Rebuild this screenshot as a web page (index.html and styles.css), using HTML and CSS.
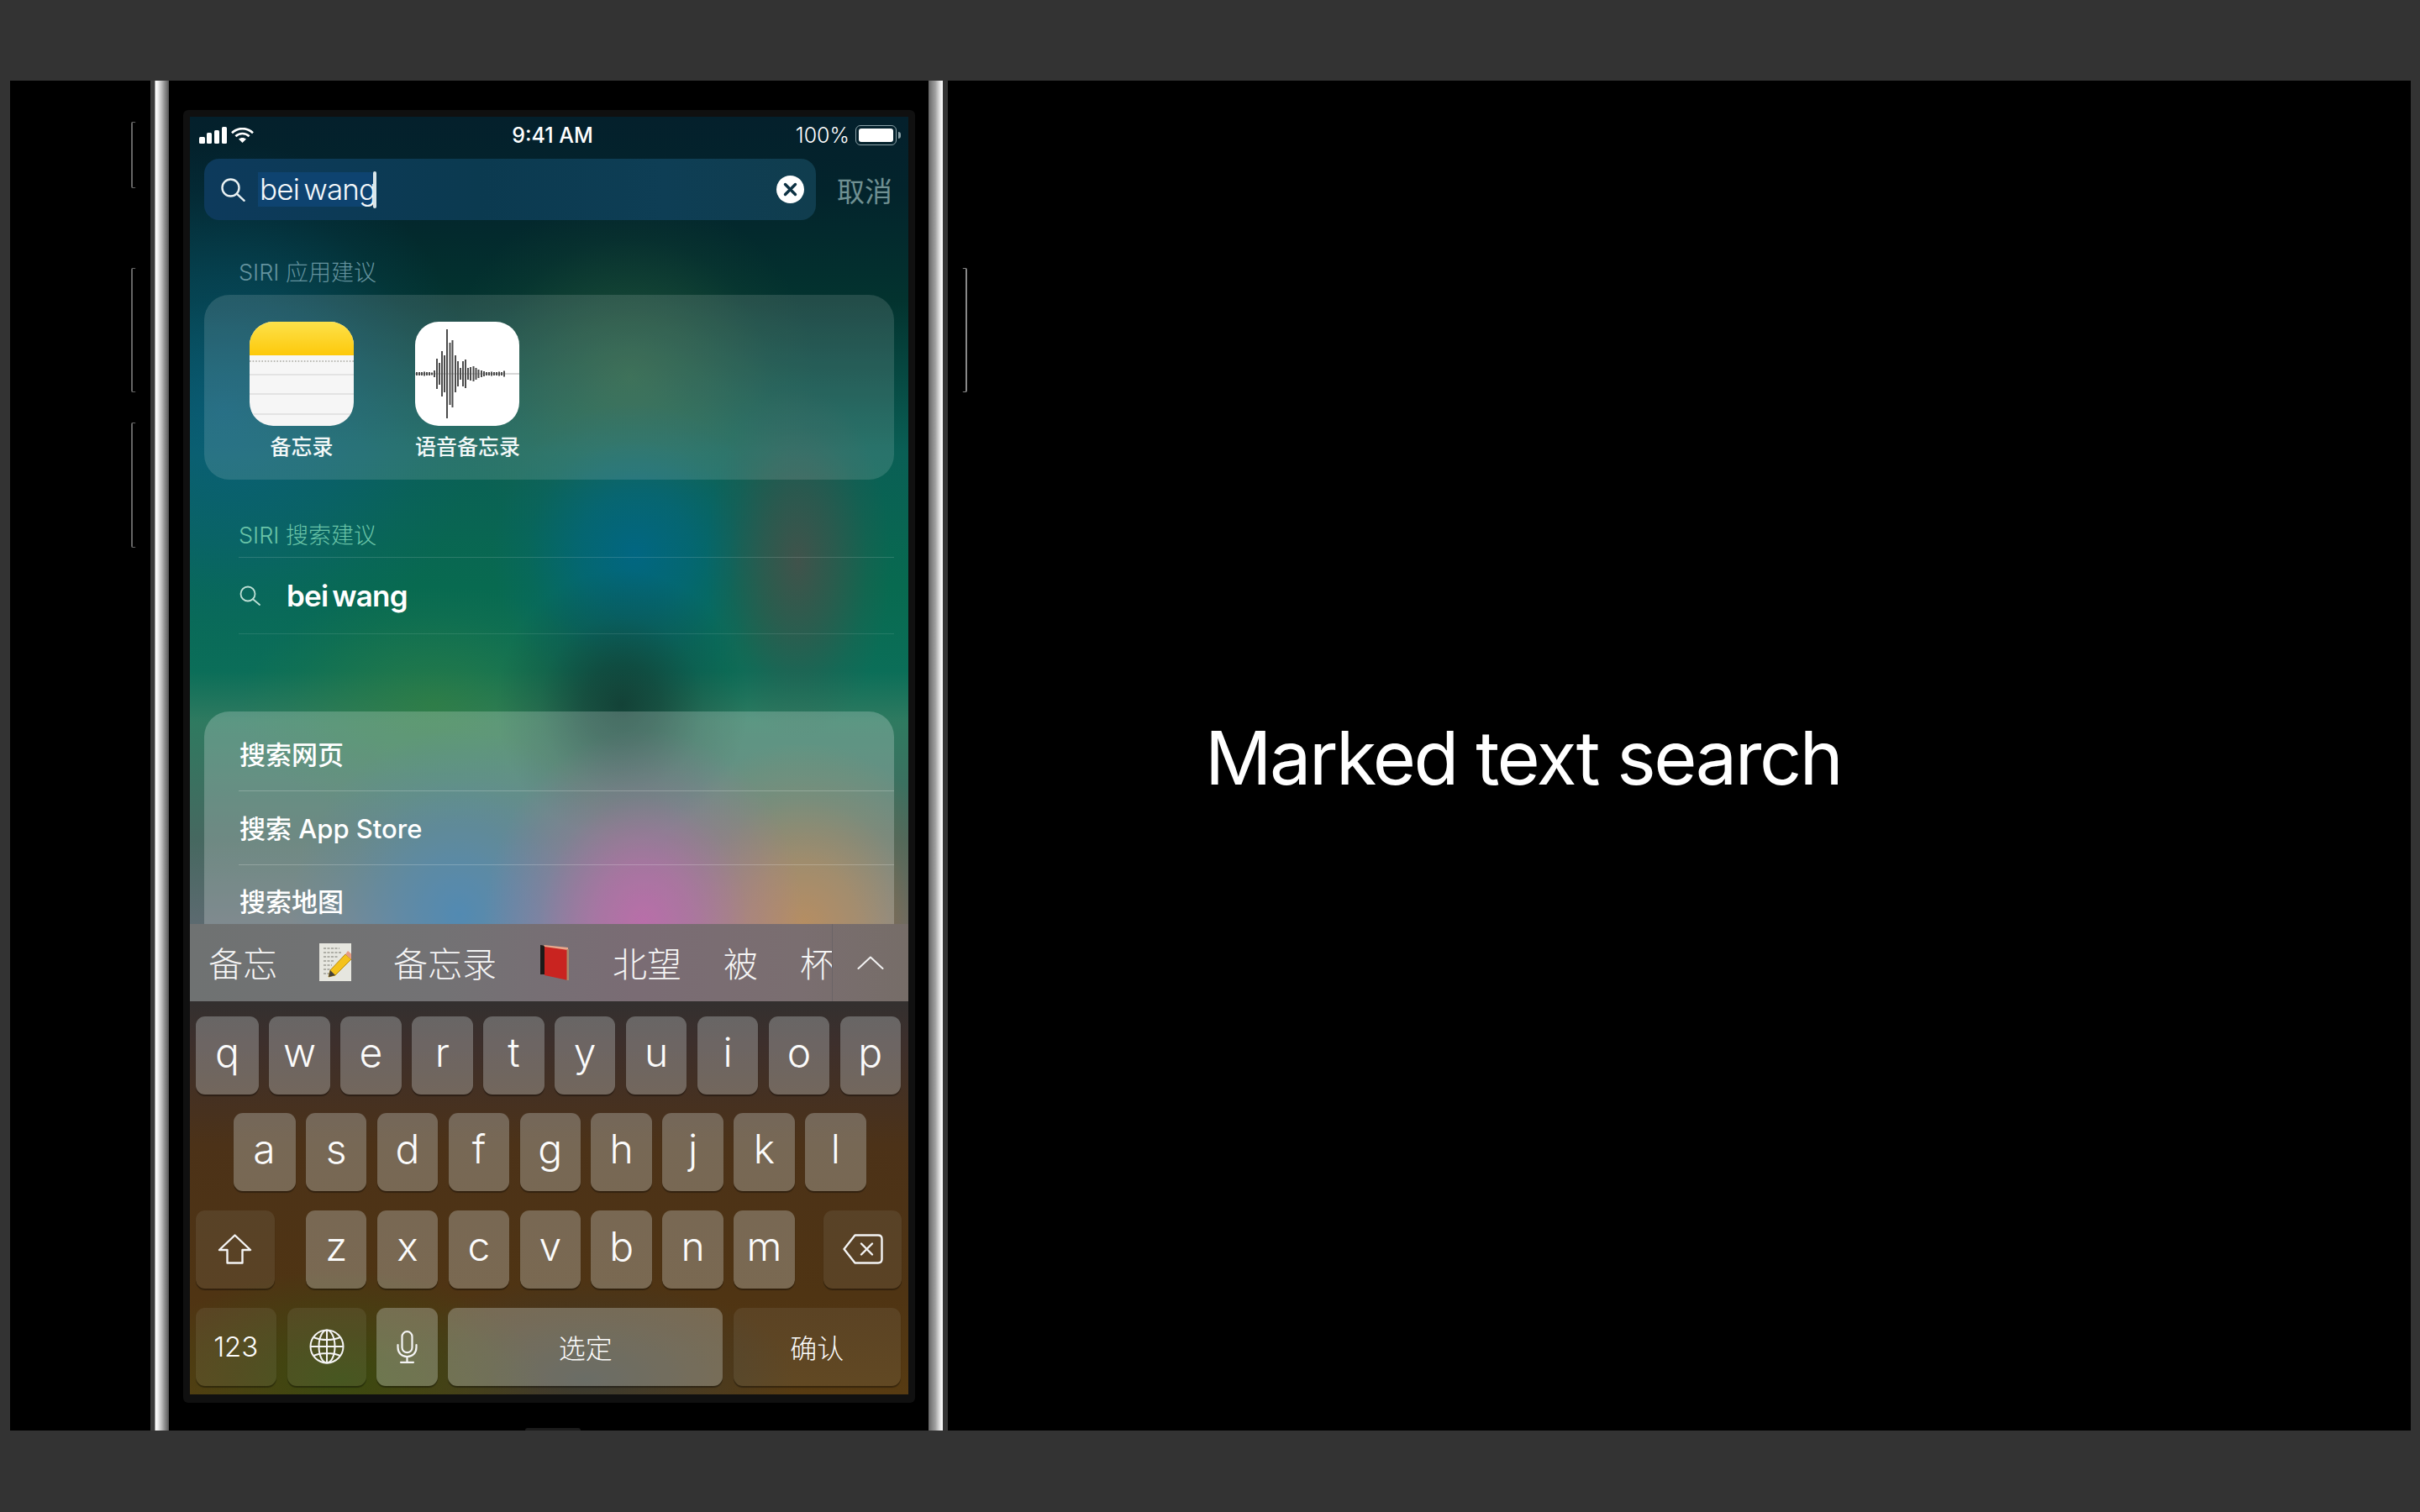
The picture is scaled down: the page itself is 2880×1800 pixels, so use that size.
FILE: index.html
```html
<!DOCTYPE html>
<html lang="en">

<head>
    <meta charset="UTF-8">
    <title>Marked text search</title>
    <link rel="stylesheet" href="styles.css">
</head>

<body>
    <div class="slide">
        <div class="side-buttons">
            <div class="side-btn mute"></div>
            <div class="side-btn vol-up"></div>
            <div class="side-btn vol-down"></div>
        </div>
        <div class="metal metal-left"></div>

        <div class="face">
            <div class="frame">
                <div class="screen">
                    <div class="results">
                        <div class="status-bar">
                            <div class="status-left">
                                <div class="signal"><i class="s1"></i><i class="s2"></i><i class="s3"></i><i class="s4"></i></div>
                                <svg class="wifi" viewBox="0 0 27 18" fill="none" stroke="#fff" stroke-width="2.6">
                                    <path d="M1 6.2C8 -0.6 19 -0.6 26 6.2" />
                                    <path d="M5.4 10.2C9.8 6 17.2 6 21.6 10.2" />
                                    <path d="M13.5 18L9 13.6C11.4 11.4 15.6 11.4 18 13.6Z" fill="#fff" stroke="none" />
                                </svg>
                            </div>
                            <div class="time">9:41 AM</div>
                            <div class="status-right">
                                <span class="percent">100%</span>
                                <div class="battery"><div class="battery-fill"></div></div>
                                <div class="battery-tip"></div>
                            </div>
                        </div>

                        <div class="search-row">
                            <div class="search-field">
                                <svg class="search-icon" viewBox="0 0 29 28" fill="none" stroke="#e8f0f2" stroke-width="2.4" stroke-linecap="round">
                                    <circle cx="11.5" cy="11.5" r="10" />
                                    <path d="M18.8 18.6L27.6 26.8" />
                                </svg>
                                <span class="marked">bei wang</span><span class="caret"></span>
                                <div class="clear-btn">
                                    <svg viewBox="0 0 33 33" fill="none" stroke="#0d3244" stroke-width="3.4" stroke-linecap="round">
                                        <path d="M10.5 10.5L22.5 22.5M22.5 10.5L10.5 22.5" />
                                    </svg>
                                </div>
                            </div>
                            <div class="cancel">取消</div>
                        </div>

                        <div class="section-title apps-title">SIRI 应用建议</div>
                        <div class="card apps-card">
                            <div class="app">
                                <svg class="app-icon" viewBox="0 0 124 124">
                                    <defs>
                                        <linearGradient id="noteTop" x1="0" y1="0" x2="0" y2="1">
                                            <stop offset="0" stop-color="#fde14a" />
                                            <stop offset="1" stop-color="#fdc90b" />
                                        </linearGradient>
                                    </defs>
                                    <rect width="124" height="124" fill="#f6f6f6" />
                                    <rect width="124" height="40" fill="url(#noteTop)" />
                                    <path d="M0 47H124" stroke="#a8a8a0" stroke-width="1.6" stroke-dasharray="1.6 2" />
                                    <path d="M0 63H124M0 86H124M0 110H124" stroke="#d0d0d0" stroke-width="1.2" />
                                </svg>
                                <div class="app-name">备忘录</div>
                            </div>
                            <div class="app">
                                <svg class="app-icon" viewBox="0 0 124 124">
                                    <rect width="124" height="124" fill="#fff" />
                                    <path d="M0 62H124" stroke="#b0b0b0" stroke-width="1.2" />
                                    <path stroke="#4c4c4c" stroke-width="2" d="M2 60V64M5 60V64M8 60V64M11 59.5V64.5M14 60V64M17 60V64M20 60.5V63.5M23 58V66M26 44V80M29 49V75M32 35V89M35 40V84M38 9V115M41.5 25V99M44.5 22V102M48 40V84M51 47V77M54 55V69M57 47V77M60 45V79M63 55V69M66 54V70M69.500 53V71M72.500 55V69M75.500 57V67M79 58V66M82 59V65M85 60V64M88 60V64M91 59.500V64.500M94 60V64M97 60V64M100 59.500V64.500M103 60V64M106 58.500V65.500" />
                                </svg>
                                <div class="app-name">语音备忘录</div>
                            </div>
                        </div>

                        <div class="section-title siri-title">SIRI 搜索建议</div>
                        <div class="suggest">
                            <svg class="suggest-icon" viewBox="0 0 27 24" fill="none" stroke="#bfe0d6" stroke-width="1.8" stroke-linecap="round">
                                <circle cx="10" cy="10" r="8.5" />
                                <path d="M16 16.200L24 23" />
                            </svg>
                            <span class="suggest-text">bei wang</span>
                        </div>

                        <div class="card web-card">
                            <div class="web-row">搜索网页</div>
                            <div class="web-row">搜索 App Store</div>
                            <div class="web-row">搜索地图</div>
                        </div>
                    </div>

                    <div class="candidates">
                        <div class="cand-list">
                            <span>备忘</span>
                            <svg class="emoji-memo" viewBox="0 0 38 45">
                                <rect width="38" height="45" fill="#e6e6df" />
                                <path d="M5 6H24M5 11H27M5 16H22M5 21H18M5 26H15M5 31H13M5 36H20" stroke="#77776f" stroke-width="1.2" stroke-dasharray="3 1.500" />
                                <path d="M31 13L38 19L19 38L11 40L13 32Z" fill="#f4c21c" stroke="#b68a14" stroke-width="1" />
                                <path d="M31 13L34 9L41 15L38 19Z" fill="#e59c82" />
                                <path d="M13 32L11 40L19 38Z" fill="#44403a" />
                            </svg>
                            <span>备忘录</span>
                            <svg class="emoji-book" viewBox="0 0 35 43">
                                <path d="M1 1L7 2V36L1 36Z" fill="#1d1a18" />
                                <path d="M6 2L34 6V43L6 37Z" fill="#c92420" />
                                <path d="M5 1L34 4V7L6 3Z" fill="#e8a78c" />
                                <path d="M32.500 6H35V43H32.500Z" fill="#a88a6c" />
                            </svg>
                            <span>北望</span>
                            <span>被</span>
                            <span>杯</span>
                        </div>
                        <div class="cand-more">
                            <svg viewBox="0 0 32 16" fill="none" stroke="#f2f2f2" stroke-width="2" stroke-linecap="round" stroke-linejoin="round">
                                <path d="M1.500 15L16 1.500L30.500 15" />
                            </svg>
                        </div>
                    </div>

                    <div class="keyboard">
                        <div class="key-row">
                            <div class="key key-q">q</div>
                            <div class="key">w</div>
                            <div class="key">e</div>
                            <div class="key">r</div>
                            <div class="key">t</div>
                            <div class="key">y</div>
                            <div class="key">u</div>
                            <div class="key">i</div>
                            <div class="key">o</div>
                            <div class="key">p</div>
                        </div>
                        <div class="key-row row-two">
                            <div class="key key-a">a</div>
                            <div class="key">s</div>
                            <div class="key">d</div>
                            <div class="key">f</div>
                            <div class="key">g</div>
                            <div class="key">h</div>
                            <div class="key">j</div>
                            <div class="key">k</div>
                            <div class="key">l</div>
                        </div>
                        <div class="key-row row-three">
                            <div class="key special key-shift">
                                <svg viewBox="0 0 41 36" fill="none" stroke="#f4f4f4" stroke-width="2.400" stroke-linejoin="round">
                                    <path d="M20.500 1.500L39 19H29.500V34.500H11.500V19H2Z" />
                                </svg>
                            </div>
                            <div class="key">z</div>
                            <div class="key">x</div>
                            <div class="key">c</div>
                            <div class="key">v</div>
                            <div class="key">b</div>
                            <div class="key">n</div>
                            <div class="key">m</div>
                            <div class="key special key-delete">
                                <svg viewBox="0 0 48 36" fill="none" stroke="#f4f4f4" stroke-width="2.400" stroke-linejoin="round" stroke-linecap="round">
                                    <path d="M14.500 1.500H42C45 1.500 46.500 3 46.500 6V30C46.500 33 45 34.500 42 34.500H14.500L1.500 18Z" />
                                    <path d="M22 11.500L35 24.500M35 11.500L22 24.500" />
                                </svg>
                            </div>
                        </div>
                        <div class="key-row">
                            <div class="key special key-num">123</div>
                            <div class="key special key-globe">
                                <svg viewBox="0 0 42 42" fill="none" stroke="#f4f4f4" stroke-width="2">
                                    <circle cx="21" cy="21" r="19.500" />
                                    <ellipse cx="21" cy="21" rx="9.500" ry="19.500" />
                                    <path d="M21 1.500V40.500M1.500 21H40.500M5 10C14 14 28 14 37 10M5 32C14 28 28 28 37 32" />
                                </svg>
                            </div>
                            <div class="key key-mic">
                                <svg viewBox="0 0 25 39" fill="none" stroke="#f4f4f4" stroke-width="2.200" stroke-linecap="round">
                                    <rect x="6.500" y="1.200" width="12" height="25" rx="6" />
                                    <path d="M1.500 17V20C1.500 26.500 6 31 12.500 31C19 31 23.500 26.500 23.500 20V17M12.500 31V37.500M5 37.800H20" />
                                </svg>
                            </div>
                            <div class="key key-space">选定</div>
                            <div class="key special key-ok">确认</div>
                        </div>
                    </div>
                </div>
            </div>
            <div class="home-bump"></div>
        </div>

        <div class="metal metal-right"></div>
        <div class="side-buttons right-buttons">
            <div class="side-btn power"></div>
        </div>

        <div class="stage">
            <h1>Marked text search</h1>
        </div>
    </div>
</body>

</html>
```

FILE: styles.css
```css
* {
    box-sizing: border-box;
}

body {
    margin: 0;
    height: 1800px;
    padding: 96px 11px 97px 12px;
    background-color: #333333;
    font-family: "Inter", "Noto Sans CJK SC", sans-serif;
    overflow: hidden;
}

.slide {
    display: flex;
    height: 100%;
    background-color: #000;
}

/* hardware buttons */
.side-buttons {
    display: flex;
    flex-direction: column;
    width: 6px;
    margin-left: 144px;
    padding-top: 49px;
}

.right-buttons {
    margin-left: 17px;
}

.side-btn {
    border: 1px solid #666;
    border-width: 1px 1px 1px 2px;
    border-radius: 2px;
    border-right-color: transparent;
}

.right-buttons .side-btn {
    border-width: 1px 2px 1px 1px;
    border-color: #888;
    border-left-color: transparent;
}

.mute {
    height: 79px;
}

.vol-up {
    height: 148px;
    margin-top: 95px;
}

.vol-down {
    height: 149px;
    margin-top: 36px;
}

.power {
    height: 148px;
    margin-top: 174px;
}

.metal {
    width: 23px;
}

.metal-left {
    width: 22px;
    margin-left: 17px;
    background: linear-gradient(90deg, #3a3a3a 0, #3a3a3a 5px, #fff 6px, #eee 9px, #8f8f8f 17px, #555 22px);
}

.metal-right {
    background: linear-gradient(90deg, #666 0, #a0a0a0 8px, #e8e8e8 14px, #fff 17px, #333 17.500px, #333 23px);
}

.face {
    position: relative;
    display: flex;
    width: 904px;
    padding: 35px 16px 33px 17px;
    background-color: #000;
}

.frame {
    width: 871px;
    padding: 8px 8px 10px 8px;
    background-color: #101010;
    border-radius: 6px;
}

.home-bump {
    position: absolute;
    left: 424px;
    bottom: 0;
    width: 66px;
    height: 3px;
    background-color: #1c1c1c;
    border-radius: 33px 33px 0 0;
}

/* screen */
.screen {
    display: flex;
    flex-direction: column;
    height: 1521px;
    color: #fff;
    overflow: hidden;
}

.results {
    height: 961px;
    overflow: hidden;
    background:
        radial-gradient(ellipse 190px 230px at 540px 960px, rgba(165, 70, 145, 1) 0, rgba(165, 70, 145, 0.72) 30%, rgba(165, 70, 145, 0.25) 65%, rgba(165, 70, 145, 0) 100%),
        radial-gradient(ellipse 190px 220px at 730px 965px, rgba(165, 111, 51, 0.95) 0, rgba(165, 111, 51, 0.65) 35%, rgba(165, 111, 51, 0.2) 70%, rgba(165, 111, 51, 0) 100%),
        radial-gradient(ellipse 200px 220px at 320px 950px, rgba(31, 106, 159, 0.95) 0, rgba(31, 106, 159, 0.6) 35%, rgba(31, 106, 159, 0.2) 70%, rgba(31, 106, 159, 0) 100%),
        radial-gradient(ellipse 150px 160px at 514px 700px, rgba(18, 63, 53, 0.95) 0, rgba(18, 63, 53, 0.7) 30%, rgba(18, 63, 53, 0.25) 65%, rgba(18, 63, 53, 0) 100%),
        radial-gradient(ellipse 230px 140px at 290px 700px, rgba(51, 128, 63, 0.7) 0, rgba(51, 128, 63, 0.4) 40%, rgba(51, 128, 63, 0.12) 75%, rgba(51, 128, 63, 0) 100%),
        radial-gradient(ellipse 110px 210px at 724px 530px, rgba(74, 79, 74, 0.85) 0, rgba(74, 79, 74, 0.5) 40%, rgba(74, 79, 74, 0.15) 75%, rgba(74, 79, 74, 0) 100%),
        radial-gradient(ellipse 170px 180px at 530px 520px, rgba(0, 102, 138, 0.85) 0, rgba(0, 102, 138, 0.55) 40%, rgba(0, 102, 138, 0.15) 75%, rgba(0, 102, 138, 0) 100%),
        radial-gradient(ellipse 220px 220px at 524px 310px, rgba(62, 112, 66, 0.5) 0, rgba(62, 112, 66, 0.25) 45%, rgba(62, 112, 66, 0.07) 75%, rgba(62, 112, 66, 0) 100%),
        radial-gradient(ellipse 300px 320px at 40px 350px, rgba(10, 95, 138, 0.65) 0, rgba(10, 95, 138, 0.35) 50%, rgba(10, 95, 138, 0.1) 80%, rgba(10, 95, 138, 0) 100%),
        linear-gradient(180deg, #04202c 0, #03242c 90px, #03332f 220px, #0a5f55 400px, #086a50 560px, #0b6e58 660px, #2f7a60 720px, #466860 860px, #5c6a70 961px);
}

.status-bar {
    display: grid;
    grid-template-columns: 1fr auto 1fr;
    align-items: center;
    height: 50px;
    padding: 0 9px 6px 11px;
}

.status-left {
    display: flex;
    align-items: center;
    gap: 5px;
}

.signal {
    display: flex;
    align-items: flex-end;
    gap: 2.400px;
    height: 20px;
}

.signal i {
    display: block;
    width: 6.500px;
    background-color: #fff;
    border-radius: 1.500px;
}

.s1 {
    height: 8px;
}

.s2 {
    height: 13px;
}

.s3 {
    height: 16px;
}

.s4 {
    height: 20px;
}

.wifi {
    width: 27px;
    height: 18px;
}

.time {
    margin-left: 6px;
    font-size: 25px;
    font-weight: 500;
}

.status-right {
    display: flex;
    align-items: center;
    justify-content: flex-end;
}

.percent {
    font-size: 25px;
    font-weight: 300;
    margin-right: 7px;
}

.battery {
    width: 49px;
    height: 24px;
    padding: 3px;
    border: 1.500px solid #8aa0a6;
    border-radius: 6px;
}

.battery-fill {
    height: 100%;
    background-color: #fff;
    border-radius: 3px;
}

.battery-tip {
    width: 3px;
    height: 8px;
    margin-left: 2px;
    background-color: #8aa0a6;
    border-radius: 0 3px 3px 0;
}

.search-row {
    display: flex;
    align-items: center;
    padding: 0 17px;
}

.search-field {
    display: flex;
    align-items: center;
    width: 728px;
    height: 73px;
    padding: 0 14px 0 20px;
    background: linear-gradient(90deg, #0d3a5c 0, #0b3a50 45%, #0e3e55 75%, #103d4e 100%);
    border-radius: 18px;
}

.search-icon {
    width: 29px;
    height: 28px;
    margin-right: 15px;
}

.marked {
    display: block;
    width: 137px;
    height: 41px;
    padding-left: 2px;
    background-color: #0e4370;
    font-size: 35px;
    line-height: 40px;
    letter-spacing: -0.800px;
    word-spacing: -4px;
    font-weight: 300;
    white-space: nowrap;
    color: #f4f8fa;
}

.caret {
    width: 4px;
    height: 44px;
    background-color: #dbe6ea;
    border-radius: 2px;
}

.clear-btn {
    width: 33px;
    height: 33px;
    margin-left: auto;
    background-color: #fff;
    border-radius: 50%;
}

.clear-btn svg {
    display: block;
}

.cancel {
    margin-left: 25px;
    font-size: 33px;
    color: #6f9092;
}

.section-title {
    height: 30px;
    padding-left: 58px;
    font-size: 27px;
    line-height: 32px;
    font-weight: 300;
    white-space: nowrap;
}

.apps-title {
    margin-top: 47px;
    color: #64939f;
}

.card {
    margin: 0 17px;
    background-color: rgba(255, 255, 255, 0.13);
    border-radius: 30px;
}

.apps-card {
    display: flex;
    gap: 73px;
    height: 220px;
    margin-top: 12px;
    padding: 32px 0 0 54px;
}

.app {
    width: 124px;
    text-align: center;
}

.app-icon {
    display: block;
    width: 124px;
    height: 124px;
    border-radius: 28px;
}

.app-name {
    margin-top: 10px;
    font-size: 25px;
    line-height: 30px;
    font-weight: 500;
    white-space: nowrap;
    color: #f2f8f8;
}

.siri-title {
    margin-top: 51px;
    color: #69c4a8;
}

.suggest {
    display: flex;
    align-items: center;
    height: 92px;
    margin: 11px 17px 0 58px;
    border-top: 1px solid rgba(255, 255, 255, 0.14);
    border-bottom: 1px solid rgba(255, 255, 255, 0.1);
}

.suggest-icon {
    width: 27px;
    height: 24px;
    margin-left: 1px;
    margin-right: 29px;
}

.suggest-text {
    font-size: 35px;
    font-weight: 600;
    letter-spacing: -0.800px;
    word-spacing: -3px;
}

.web-card {
    height: 260px;
    margin-top: 92px;
    padding: 7px 0 0 41px;
    background-color: rgba(255, 255, 255, 0.22);
    border-radius: 30px 30px 0 0;
}

.web-row {
    height: 88px;
    padding-left: 1px;
    font-size: 31px;
    font-weight: 500;
    line-height: 90px;
    border-bottom: 1px solid rgba(255, 255, 255, 0.22);
    white-space: nowrap;
}

.web-row:last-child {
    border-bottom: none;
    line-height: 88px;
}

/* candidates bar */
.candidates {
    display: flex;
    flex-shrink: 0;
    height: 92px;
    background: linear-gradient(90deg, #6f7272 0, #737274 35%, #7a6c74 62%, #7a6e70 85%, #766d68 100%);
}

.cand-list {
    display: flex;
    align-items: center;
    gap: 50px;
    width: 765px;
    padding-left: 22px;
    padding-bottom: 2px;
    overflow: hidden;
    font-size: 41px;
    font-weight: 300;
    white-space: nowrap;
    color: #f4f4f4;
    border-right: 1px solid #6a6466;
}

.emoji-memo {
    flex-shrink: 0;
    width: 38px;
    height: 45px;
}

.emoji-book {
    flex-shrink: 0;
    width: 35px;
    height: 43px;
    margin-left: 1px;
    margin-right: 2px;
}

.cand-more {
    display: flex;
    flex: 1;
    align-items: center;
    justify-content: center;
}

.cand-more svg {
    width: 32px;
    height: 16px;
}

/* keyboard */
.keyboard {
    display: flex;
    flex-direction: column;
    gap: 22.700px;
    flex: 1;
    padding: 17.500px 8px 0 7px;
    background:
        radial-gradient(ellipse 240px 130px at 180px 450px, #3a4a10 0, rgba(58, 74, 16, 0) 100%),
        radial-gradient(ellipse 250px 120px at 470px 450px, #3a3a30 0, rgba(58, 58, 48, 0) 100%),
        linear-gradient(180deg, #33302f 0, #3d2f2c 50px, #4c3218 170px, #4f3413 350px, #573b12 468px);
}

.key-row {
    display: flex;
    gap: 12.400px;
    height: 93px;
}

.key {
    display: flex;
    align-items: center;
    justify-content: center;
    width: 72.500px;
    height: 93px;
    padding-bottom: 8px;
    background-color: rgba(235, 245, 245, 0.28);
    border-radius: 11px;
    box-shadow: 0 2px 1px rgba(0, 0, 0, 0.35);
    font-size: 48px;
    font-weight: 300;
    color: #fbfbfb;
}

.key-q {
    width: 75px;
}

.row-two {
    padding-left: 44.500px;
}

.key-a {
    width: 74px;
}

.key-shift {
    width: 94px;
    margin-right: 24.600px;
}

.key-delete {
    width: 93px;
    margin-left: 22px;
}

.special {
    background-color: rgba(235, 245, 245, 0.08);
    padding-bottom: 0;
}

.key-shift svg {
    width: 41px;
    height: 36px;
}

.key-delete svg {
    width: 48px;
    height: 36px;
}

.key-num {
    width: 95.500px;
    margin-right: 1px;
    font-size: 33px;
}

.key-globe {
    width: 94px;
}

.key-globe svg {
    width: 42px;
    height: 42px;
}

.key-mic {
    padding-bottom: 0;
}

.key-mic svg {
    width: 25px;
    height: 39px;
}

.key-space {
    width: 327px;
    padding-bottom: 0;
    font-size: 32px;
}

.key-ok {
    width: 199.500px;
    font-size: 32px;
}

/* right side title */
.stage {
    display: flex;
    flex: 1;
    align-items: center;
    padding: 5px 0 0 283px;
}

.stage h1 {
    margin: 0;
    font-size: 88px;
    font-weight: 400;
    letter-spacing: -2.500px;
    color: #fff;
    white-space: nowrap;
}
```
